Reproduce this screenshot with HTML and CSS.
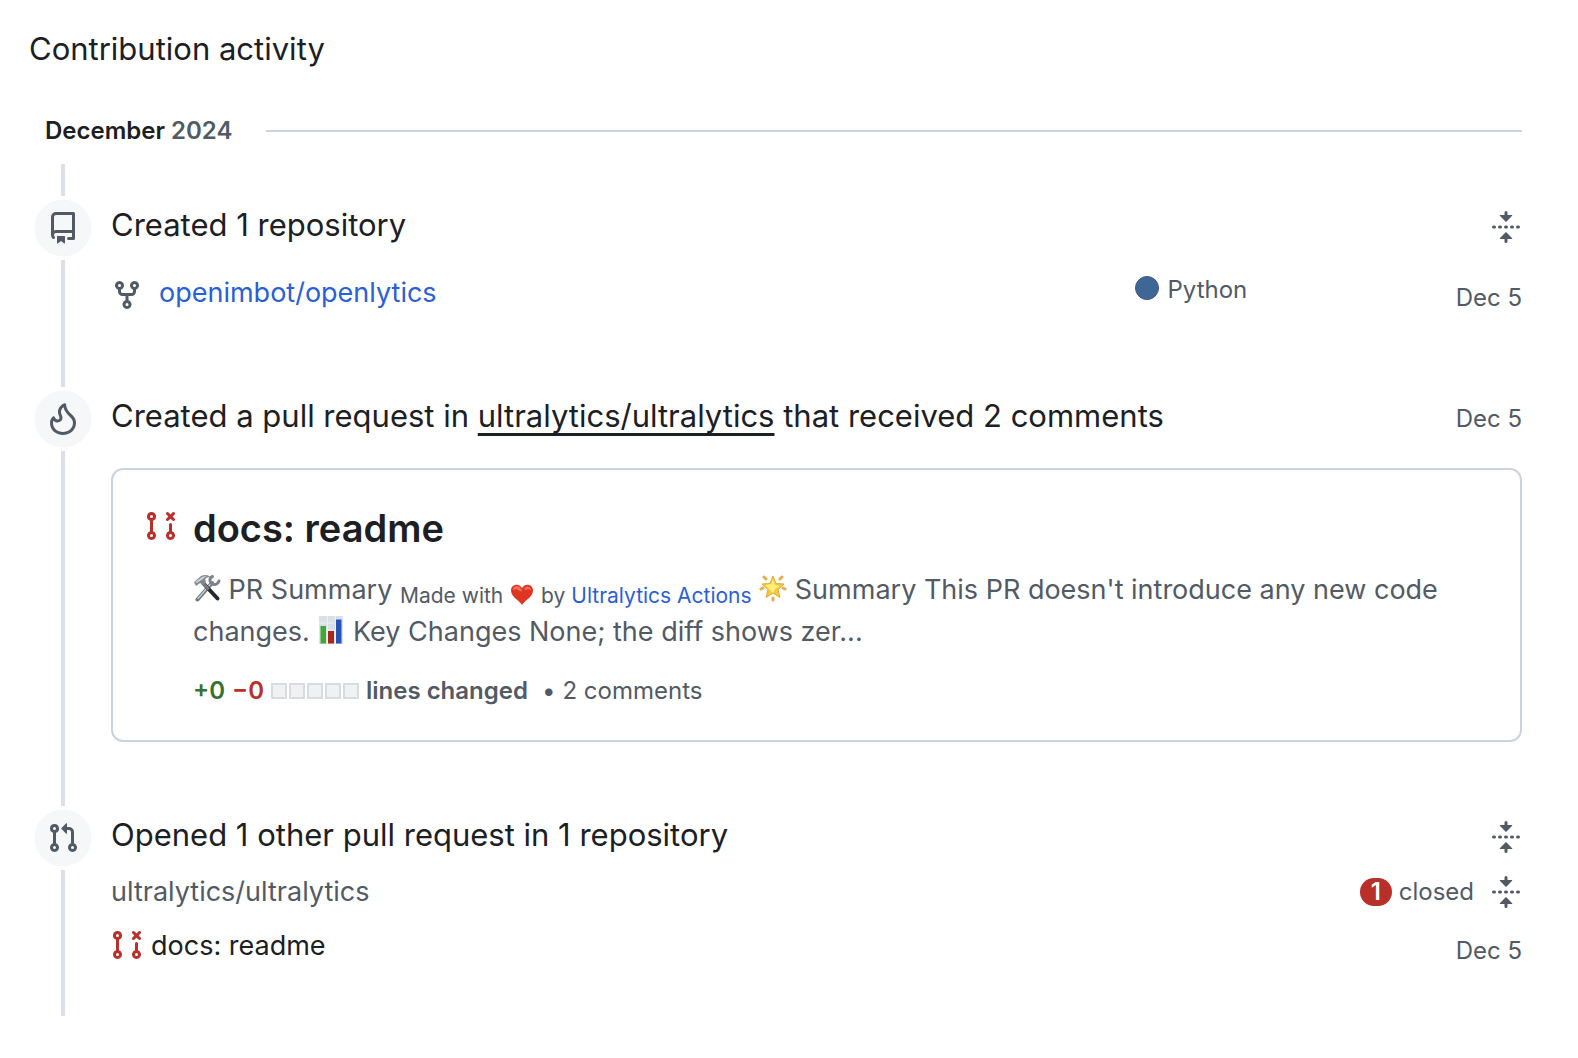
FILE: index.html
```html
<!DOCTYPE html>
<html lang="en">
<head>
<meta charset="utf-8">
<meta name="viewport" content="width=device-width, initial-scale=1">
<title>Contribution activity</title>
<link rel="stylesheet" href="styles.css">
</head>
<body>
<svg class="sprite" aria-hidden="true">
  <symbol id="fold" viewBox="0 0 16 16"><path d="M10.896 2H8.75V.75a.75.75 0 0 0-1.5 0V2H5.104a.25.25 0 0 0-.177.427l2.896 2.896a.25.25 0 0 0 .354 0l2.896-2.896A.25.25 0 0 0 10.896 2ZM8.75 15.25a.75.75 0 0 1-1.5 0V14H5.104a.25.25 0 0 1-.177-.427l2.896-2.896a.25.25 0 0 1 .354 0l2.896 2.896a.25.25 0 0 1-.177.427H8.75v1.25Zm-6.5-6.5a.75.75 0 0 0 0-1.5h-.5a.75.75 0 0 0 0 1.5h.5ZM6 8a.75.75 0 0 1-.75.75h-.5a.75.75 0 0 1 0-1.5h.5A.75.75 0 0 1 6 8Zm2.25.75a.75.75 0 0 0 0-1.5h-.5a.75.75 0 0 0 0 1.5h.5ZM12 8a.75.75 0 0 1-.75.75h-.5a.75.75 0 0 1 0-1.5h.5A.75.75 0 0 1 12 8Zm2.25.75a.75.75 0 0 0 0-1.5h-.5a.75.75 0 0 0 0 1.5h.5Z"/></symbol>
  <symbol id="pr-closed" viewBox="0 0 16 16"><path d="M3.25 1A2.25 2.25 0 0 1 4 5.372v5.256a2.251 2.251 0 1 1-1.5 0V5.372A2.251 2.251 0 0 1 3.25 1Zm9.5 5.5a.75.75 0 0 1 .75.75v3.378a2.251 2.251 0 1 1-1.5 0V7.25a.75.75 0 0 1 .75-.75Zm-2.03-5.273a.75.75 0 0 1 1.06 0l.97.97.97-.97a.748.748 0 0 1 1.265.332.75.75 0 0 1-.205.729l-.97.97.97.97a.751.751 0 0 1-.018 1.042.751.751 0 0 1-1.042.018l-.97-.97-.97.97a.749.749 0 0 1-1.275-.326.749.749 0 0 1 .215-.734l.97-.97-.97-.97a.75.75 0 0 1 0-1.06ZM2.5 3.25a.75.75 0 1 0 1.5 0 .75.75 0 0 0-1.5 0ZM3.25 12a.75.75 0 1 0 0 1.5.75.75 0 0 0 0-1.5Zm9.5 0a.75.75 0 1 0 0 1.5.75.75 0 0 0 0-1.5Z"/></symbol>
</svg>
<main class="activity">
  <h2 class="activity-title">Contribution activity</h2>
  <h3 class="month"><span>December <span class="year">2024</span></span></h3>
  <ol class="timeline">
    <li class="item">
      <span class="badge"><svg class="icon" viewBox="0 0 16 16" aria-hidden="true"><path d="M2 2.5A2.5 2.5 0 0 1 4.5 0h8.75a.75.75 0 0 1 .75.75v12.5a.75.75 0 0 1-.75.75h-2.5a.75.75 0 0 1 0-1.5h1.75v-2h-8a1 1 0 0 0-.714 1.7.75.75 0 1 1-1.072 1.05A2.495 2.495 0 0 1 2 11.5Zm10.5-1h-8a1 1 0 0 0-1 1v6.708A2.486 2.486 0 0 1 4.5 9h8ZM5 12.25a.25.25 0 0 1 .25-.25h3.5a.25.25 0 0 1 .25.25v3.25a.25.25 0 0 1-.4.2l-1.45-1.087a.249.249 0 0 0-.3 0L5.4 15.7a.25.25 0 0 1-.4-.2Z"/></svg></span>
      <div class="content">
        <div class="heading">
          <h4 class="heading-text">Created 1 repository</h4>
          <button class="fold" type="button" aria-label="Collapse"><svg class="icon" aria-hidden="true"><use href="#fold"/></svg></button>
        </div>
        <div class="repo">
          <svg class="icon" viewBox="0 0 16 16" aria-hidden="true"><path d="M5 5.372v.878c0 .414.336.75.75.75h4.5a.75.75 0 0 0 .75-.75v-.878a2.25 2.25 0 1 1 1.5 0v.878a2.25 2.25 0 0 1-2.25 2.25h-1.5v2.128a2.251 2.251 0 1 1-1.5 0V8.5h-1.5A2.25 2.25 0 0 1 3.5 6.25v-.878a2.25 2.25 0 1 1 1.5 0ZM5 3.25a.75.75 0 1 0-1.5 0 .75.75 0 0 0 1.5 0Zm6.75.75a.75.75 0 1 0 0-1.5.75.75 0 0 0 0 1.5Zm-3 8.75a.75.75 0 1 0-1.5 0 .75.75 0 0 0 1.5 0Z"/></svg>
          <a class="repo-name" href="#">openimbot/openlytics</a>
          <span class="language"><span class="language-dot"></span>Python</span>
          <time class="date" datetime="2024-12-05">Dec 5</time>
        </div>
      </div>
    </li>
    <li class="item">
      <span class="badge"><svg class="icon" viewBox="0 0 16 16" aria-hidden="true"><path d="M9.533.753V.752c.217 2.385 1.463 3.626 2.653 4.81C13.37 6.74 14.498 7.863 14.498 10c0 3.5-3 6-6.5 6S1.5 13.512 1.5 10c0-1.298.536-2.56 1.425-3.286.376-.308.862 0 1.035.454C4.46 8.487 5.581 8.419 6 8c.282-.282.341-.811-.003-1.5C4.34 3.187 7.035.75 8.77.146c.39-.137.726.194.763.607ZM7.998 14.5c2.832 0 5-1.98 5-4.5 0-1.463-.68-2.19-1.879-3.383l-.036-.037c-1.013-1.008-2.3-2.29-2.834-4.434-.322.256-.63.579-.864.953-.432.696-.621 1.58-.046 2.73.473.947.67 2.284-.278 3.232-.61.61-1.545.84-2.403.633a2.79 2.79 0 0 1-1.436-.874A3.198 3.198 0 0 0 3 10c0 2.53 2.164 4.5 4.998 4.5Z"/></svg></span>
      <div class="content">
        <div class="heading">
          <h4 class="heading-text">Created a pull request in <a class="heading-link" href="#">ultralytics/ultralytics</a> that received 2 comments</h4>
          <time class="date-inline" datetime="2024-12-05">Dec 5</time>
        </div>
        <article class="card">
          <svg class="icon closed" aria-hidden="true"><use href="#pr-closed"/></svg>
          <div class="card-body">
            <h3 class="card-title"><a href="#">docs: readme</a></h3>
            <p class="summary"><svg class="emoji" viewBox="0 0 28 28" role="img" aria-label="Hammer and wrench"><g fill="none" stroke-linecap="round"><path d="M4.500 25.500 19 9" stroke="#70757c" stroke-width="4"/><path d="M5 24.500 18.500 9" stroke="#c5c9ce" stroke-width="1.500"/><path d="m10 9 14.500 15.500" stroke="#25282c" stroke-width="4"/><path d="m10 9 5 5.500" stroke="#777b81" stroke-width="3"/><path d="M19.500 2.500c-3 1-3.500 5-1 7s6.500 1 7.500-2.500" stroke="#7e848b" stroke-width="3"/></g><path d="M1 8 8 2C12 0 16 1 17 3c-3 0-4 1-5 2.500L13 8l-3 3-3-2-4 3Z" fill="#82888f"/><path d="m2 8 7-5c2-1 4-1 5-1-2 1-3 2-4 3L4 9Z" fill="#cbd0d6"/></svg> PR Summary <sub>Made with <svg class="heart" viewBox="0 0 22 22" role="img" aria-label="Love"><path d="M11 21C9 17 0 13 0 6.500 0 0 8-1.500 11 4c3-5.500 11-4 11 2.500C22 13 13 17 11 21Z" fill="#df3623"/><path d="M2 6c0-5 6-5 8-1 2 2 1 3-1 2C6 5 4 5 2 6Zm11-1c2-4 7-3 7 1-3-2-5 1-7-1Z" fill="#f26d5c"/></svg> by <a href="#">Ultralytics Actions</a></sub> <svg class="emoji" viewBox="0 0 28 28" role="img" aria-label="Glowing star"><path d="m14 2 3 7.500 8 .5-6 5.500 2 8-7-4.500-7 4.500 2-8L3 10l8-.5Z" fill="#f6c83e" stroke="#e5a92f" stroke-linejoin="round"/><path d="m14 5 2 6 5 1-5 3-2 4-3-3-5-5 6-1Z" fill="#fff17c"/><path d="m5 3 2 2M23 3l-2 2M2 15l2-1m22 1-2-1m-10 10v2" fill="none" stroke="#e4ad4d" stroke-width="3" stroke-linecap="round"/></svg> Summary This PR doesn't introduce any new code changes. <svg class="emoji chart" viewBox="0 0 24 28" role="img" aria-label="Bar chart"><path d="M0 0h24v28H0Z" fill="#d9e0e7"/><path d="M0 7h24M0 14h24M0 21h24M8.500 0v28M16.500 0v28" stroke="#edf1f5"/><path d="M1.500 10H7v17.500H1.500Z" fill="#43a832"/><path d="M9 15h6v12.500H9Z" fill="#a9281b"/><path d="M17 3.500h5.500v24H17Z" fill="#2653b7"/></svg> Key Changes None; the diff shows zer...</p>
            <div class="stats">
              <a class="diffstat" href="#"><span class="added">+0</span> <span class="removed">−0</span><span class="blocks"><i></i><i></i><i></i><i></i><i></i></span>lines changed</a>
              <span class="dot">•</span>
              <a href="#">2 comments</a>
            </div>
          </div>
        </article>
      </div>
    </li>
    <li class="item">
      <span class="badge"><svg class="icon" viewBox="0 0 16 16" aria-hidden="true"><path d="M1.500 3.250a2.250 2.250 0 1 1 3 2.122v5.256a2.251 2.251 0 1 1-1.500 0V5.372A2.250 2.250 0 0 1 1.500 3.250Zm5.677-.177L9.573.677A.25.25 0 0 1 10 .854V2.500h1A2.500 2.500 0 0 1 13.500 5v5.628a2.251 2.251 0 1 1-1.500 0V5a1 1 0 0 0-1-1h-1v1.646a.25.25 0 0 1-.427.177L7.177 3.427a.25.25 0 0 1 0-.354ZM3.750 2.500a.75.75 0 1 0 0 1.500.75.75 0 0 0 0-1.500Zm0 9.500a.75.75 0 1 0 0 1.500.75.75 0 0 0 0-1.500Zm8.250.75a.75.75 0 1 0 1.500 0 .75.75 0 0 0-1.500 0Z"/></svg></span>
      <div class="content">
        <div class="heading">
          <h4 class="heading-text">Opened 1 other pull request in 1 repository</h4>
          <button class="fold" type="button" aria-label="Collapse"><svg class="icon" aria-hidden="true"><use href="#fold"/></svg></button>
        </div>
        <div class="pr-group">
          <span class="pr-repo">ultralytics/ultralytics</span>
          <span class="count"><span class="count-pill">1</span>closed</span>
          <button class="fold" type="button" aria-label="Collapse ultralytics/ultralytics"><svg class="icon" aria-hidden="true"><use href="#fold"/></svg></button>
        </div>
        <div class="pr">
          <svg class="icon closed" aria-hidden="true"><use href="#pr-closed"/></svg>
          <a class="pr-title" href="#">docs: readme</a>
          <time class="date" datetime="2024-12-05">Dec 5</time>
        </div>
      </div>
    </li>
  </ol>
</main>
</body>
</html>
```
FILE: styles.css
```css
:root {
  --fg: #1c2024;
  --muted: #525a65;
  --link: #2b5fd4;
  --red: #b9302b;
  --green: #357132;
  --border: #cdd3dc;
  --rail: #dbdfe8;
}

* { box-sizing: border-box; }

body {
  margin: 0;
  background: #fff;
  color: var(--fg);
  font-family: Inter, "Liberation Sans", sans-serif;
  font-size: 24px;
  line-height: 36px;
}

h2, h3, h4, p, ol { margin: 0; padding: 0; font-weight: 400; }
a { color: inherit; text-decoration: none; }
.sprite { display: none; }

.icon {
  display: block;
  flex: none;
  width: 32px;
  height: 32px;
  fill: currentColor;
}

.closed { color: var(--red); }

.activity { padding: 24px 56px 42px 29px; }

.activity-title, .heading-text { font-size: 31px; line-height: 50px; }

.month {
  display: flex;
  align-items: center;
  gap: 34px;
  margin-top: 39px;
  padding: 0 0 15px 16px;
  font-size: 24px;
  font-weight: 600;
}

.month::after {
  content: "";
  flex: 1;
  height: 2px;
  background: var(--border);
}

.year { color: var(--muted); }

.timeline { margin-left: 2px; list-style: none; }

.item {
  position: relative;
  display: flex;
  gap: 16px;
  padding: 32px 0;
}

.item::before {
  content: "";
  position: absolute;
  top: 0;
  bottom: 0;
  left: 30px;
  width: 4px;
  background: var(--rail);
}

.item:last-child { padding-bottom: 47px; }

/* White square interrupts the rail, the tinted circle sits inside it */
.badge {
  z-index: 0;
  display: grid;
  flex: none;
  place-items: center;
  width: 64px;
  height: 64px;
  background: radial-gradient(circle, #f5f7f9 28px, #fff 29px);
  color: var(--muted);
}

.content { flex: 1; min-width: 0; padding-top: 4px; }

.heading {
  display: flex;
  align-items: baseline;
  justify-content: space-between;
}

.heading-link {
  text-decoration: underline;
  text-decoration-thickness: 3px;
  text-decoration-skip-ink: none;
  text-underline-offset: 6px;
}

.date-inline { color: var(--muted); }

.fold {
  padding: 0;
  border: 0;
  background: none;
  color: var(--muted);
  cursor: pointer;
}

.heading .fold { align-self: center; margin-top: 4px; }

.repo {
  display: grid;
  grid-template-columns: 32px 3fr 1fr auto;
  align-items: start;
  margin-top: 22px;
  padding-bottom: 7px;
  color: var(--muted);
}

.repo .icon { margin-top: 7px; }

.repo-name {
  margin-left: 16px;
  color: var(--link);
  font-size: 27px;
  line-height: 42px;
}

.language { display: flex; gap: 8px; margin-left: 8px; }

.language-dot {
  width: 24px;
  height: 24px;
  margin-top: 4px;
  border: 1px solid #365b88;
  border-radius: 50%;
  background: #3f6796;
}

.date {
  margin-left: auto;
  padding-top: 8px;
  color: var(--muted);
}

.card {
  display: flex;
  gap: 16px;
  margin-top: 27px;
  padding: 32px 32px 31px;
  border: 2px solid var(--border);
  border-radius: 12px;
  color: var(--muted);
}

.card > .icon { margin-top: 8px; }
.card-body { flex: 1; min-width: 0; }

.card-title {
  color: var(--fg);
  font-size: 38px;
  font-weight: 600;
  line-height: 52px;
}

.summary {
  margin: 15px 0 20px;
  font-size: 27px;
  line-height: 42px;
}

.summary sub { font-size: 21px; line-height: 0; vertical-align: -4px; }
.summary a { color: var(--link); }

.emoji { width: 28px; height: 28px; vertical-align: -3px; }
.chart { width: 24px; margin: 0 2px; }
.heart { width: 22px; height: 22px; margin: 0 2px; vertical-align: -3px; }

.stats { display: flex; align-items: center; gap: 7px; }

.diffstat { display: flex; align-items: center; gap: 7px; font-weight: 600; }
.added { color: var(--green); }
.removed { color: var(--red); }
.blocks { display: flex; gap: 2px; }

.blocks i {
  width: 16px;
  height: 16px;
  border: 2px solid #d7dce3;
  background: #eff1f3;
}

.dot { margin-left: 7px; }

.pr-group {
  display: flex;
  align-items: center;
  margin-top: 11px;
  color: var(--muted);
}

.pr-repo { flex: 1; font-size: 27px; line-height: 42px; }

.count { display: flex; align-items: center; gap: 7px; margin-right: 16px; }

.count-pill {
  min-width: 32px;
  border-radius: 14px;
  background: var(--red);
  color: #fff;
  font-weight: 600;
  line-height: 28px;
  text-align: center;
}

.pr {
  display: flex;
  align-items: flex-start;
  gap: 8px;
  margin-top: 12px;
}

.pr .icon { margin-top: 4px; }
.pr-title { font-size: 27px; line-height: 42px; }
```
